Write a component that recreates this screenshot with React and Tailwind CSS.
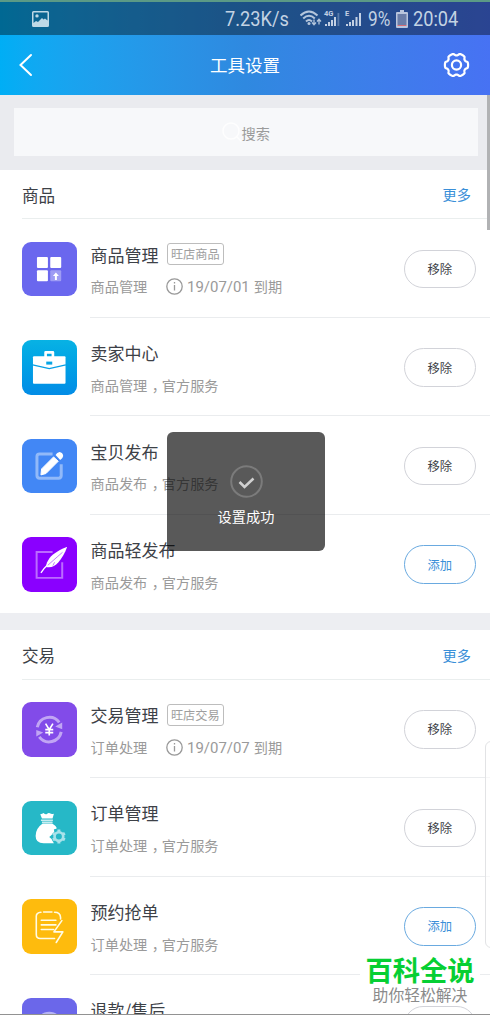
const products = [
  { name: '商品管理', tag: '旺店商品', desc: ['商品管理'], expires: '19/07/01', added: true, icon: 'grid' },
  { name: '卖家中心', desc: ['商品管理', '官方服务'], added: true, icon: 'case' },
  { name: '宝贝发布', desc: ['商品发布', '官方服务'], added: true, icon: 'pencil' },
  { name: '商品轻发布', desc: ['商品发布', '官方服务'], added: false, icon: 'feather' },
];

const trades = [
  { name: '交易管理', tag: '旺店交易', desc: ['订单处理'], expires: '19/07/07', added: true, icon: 'yen' },
  { name: '订单管理', desc: ['订单处理', '官方服务'], added: true, icon: 'bag' },
  { name: '预约抢单', desc: ['订单处理', '官方服务'], added: false, icon: 'order' },
  { name: '退款/售后', desc: ['订单处理', '官方服务'], added: true, icon: 'refund' },
];

const iconBg = {
  grid: 'bg-[#6a67ee]',
  case: 'bg-gradient-to-b from-[#08b2e4] to-[#038ce6]',
  pencil: 'bg-[#4287f5]',
  feather: 'bg-[#8a00ff]',
  yen: 'bg-[#824be9]',
  bag: 'bg-[#26b8c7]',
  order: 'bg-[#febb0d]',
  refund: 'bg-[#6b67ea]',
};

// Outline with six soft lobes, used by the gear shapes
function gearPath(cx, cy, r, depth) {
  const points = [];
  for (let i = 0; i < 72; i++) {
    const a = (i * Math.PI) / 36;
    const wave = Math.tanh(2.5 * (Math.cos(6 * a) + 0.45));
    const d = r + depth * wave;
    points.push(`${(cx + d * Math.cos(a)).toFixed(2)} ${(cy + d * Math.sin(a)).toFixed(2)}`);
  }
  return `M${points.join('L')}Z`;
}

const drawings = {
  grid: (
    <g fill="#fff">
      <rect x="45" y="45" width="33" height="33" rx="3" />
      <rect x="85" y="45" width="33" height="33" rx="3" />
      <rect x="45" y="85" width="33" height="33" rx="3" />
      <rect x="85" y="85" width="33" height="33" rx="3" opacity=".35" />
      <path d="M102 92l9 10h-6v12h-6v-12h-6z" />
    </g>
  ),
  case: (
    <g>
      <path d="M71 52V37h22v15" fill="none" stroke="#fff" strokeWidth="8" strokeLinejoin="round" />
      <rect x="33" y="49" width="98" height="83" rx="3" fill="#fff" />
      <path d="M32 75l50 11 50-11" fill="none" stroke="#069fe5" strokeWidth="4" />
      <rect x="73" y="65" width="18" height="9" fill="#07a5e5" />
    </g>
  ),
  pencil: (
    <g>
      <path d="M92 45H53q-8 0-8 8v57q0 8 8 8h57q8 0 8-8V76" fill="none" stroke="#fff" strokeWidth="9" opacity=".42" />
      <path d="M57 108l2-18L95 54l14 13-37 37z" fill="#fff" stroke="#fff" strokeWidth="3" strokeLinejoin="round" />
      <path d="M101 48q4-8 12-9 10 2 11 12-1 7-9 12z" fill="#fff" />
    </g>
  ),
  feather: (
    <g>
      <path d="M92 45H44v78h77V76" fill="none" stroke="#fff" strokeWidth="6" opacity=".42" />
      <path d="M136 29C118 36 94 48 83 63c-6 9-10 16-11 27 13 4 27-1 37-13 10-13 21-29 27-48z" fill="#fff" />
      <path d="M72 90C88 76 101 64 122 46M93 86l5-10" fill="none" stroke="#8a00ff" strokeWidth="2.2" opacity=".7" />
      <path d="M57 108q9-14 21-25" fill="none" stroke="#fff" strokeWidth="4" />
    </g>
  ),
  yen: (
    <g>
      <path d="M46 76A37 37 0 0 1 112 61M118 90A37 37 0 0 1 52 105" fill="none" stroke="#fff" strokeWidth="9" opacity=".5" />
      <path d="M121 62v20l-21-8zM43 104V84l21 8z" fill="#fff" opacity=".5" />
      <path d="M71 65l11 18 11-18M82 83v18M70 83h24M70 92h24" fill="none" stroke="#fff" strokeWidth="5" />
    </g>
  ),
  bag: (
    <g fill="#fff">
      <path d="M55 40q6-1 10-4 5 5 10 3 5-5 9-2 5 4 12 1l-4 15H60z" />
      <path d="M57 56h36v4H57zM60 62h32v4H60z" opacity=".75" />
      <path d="M62 68h29q10 6 14 14-6 4-9 3l1 8q-6 4-8 9l-7 6 7 6q3 7 7 13H65q-24 0-24-22 0-22 21-37z" />
      <circle cx="111" cy="107" r="13" fill="none" stroke="#a9e2ea" strokeWidth="8" />
      <path
        d="M111 86v8M111 120v8M93 97l7 4M122 113l7 4M93 117l7-4M122 101l7-4"
        stroke="#a9e2ea"
        strokeWidth="9"
      />
    </g>
  ),
  order: (
    <g fill="none" stroke="#fffbe4" strokeWidth="4.8" strokeLinecap="round" strokeLinejoin="round">
      <path d="M65 39h25M57 40q-14 1-14 12v55q0 12 12 12h43M98 40q17 0 18 15v5M58 64h44M58 78h44M58 92h37M120 65l-24 34h27l-20 32" />
    </g>
  ),
  refund: (
    <g fill="none" stroke="#fff" strokeWidth="7">
      <circle cx="82" cy="82" r="37" opacity=".5" />
    </g>
  ),
};

function ToolIcon({ name }) {
  return (
    <div className={`w-[54.5px] h-[54.5px] rounded-[9px] flex-shrink-0 overflow-hidden ${iconBg[name]}`}>
      <svg className="w-full h-full" viewBox="0 0 164 164">
        {drawings[name]}
      </svg>
    </div>
  );
}

function StatusBar() {
  return (
    <div className="h-[35px] pt-px flex items-center bg-black/40 border-t-2 border-[#5b9a86] text-[#c3d3e3] font-[Roboto] text-[20px]">
      <svg className="ml-8 w-[17px] h-[16px] flex-shrink-0" viewBox="0 0 17 16">
        <path
          fill="#bfd9e6"
          fillRule="evenodd"
          d="M1.500 0h14Q17 0 17 1.500v13q0 1.500-1.500 1.500h-14Q0 16 0 14.500v-13Q0 0 1.500 0zM1.500 1.500v10.500l2.500-2 2 1 4-4 1.500 1.500L13 7.500l2.500 2v-8zM5 3.200a1.700 1.700 0 1 1 0 3.400 1.700 1.700 0 0 1 0-3.400z"
        />
      </svg>
      <span className="ml-[176px] w-[75px] flex-shrink-0 whitespace-nowrap origin-left scale-x-[0.91]">7.23K/s</span>
      <svg className="w-[64px] h-[20px] flex-shrink-0" viewBox="0 0 64 20">
        <g fill="none" stroke="#b4c6dc" strokeWidth="2">
          <path d="M.5 6.500Q9-1.500 17.500 6.500M3.200 9.500q5.800-5.500 11.600 0M6 12.500q3-3 6 0" />
          <path d="M14 10.500v5M12 13.500l2 2.200 2-2.200M19 15.500v-5M17 12.500l2-2.200 2 2.200" strokeWidth="1.300" />
        </g>
        <circle cx="9" cy="14.500" r="1.500" fill="#b4c6dc" />
        <path d="M25 17v-2h2v2zM28 17v-4h2v4zM31 17v-6h2v6zM34 17V8h2v9zM46 17v-2h2v2zM49 17v-4h2v4zM52 17v-6h2v6zM55.500 17V8h2v9zM59 17V4h2v13z" fill="#c3d0e4" />
        <path d="M37.500 17V4h1.800v13z" fill="#c3d0e4" opacity=".35" />
        <text x="24" y="7" fontSize="7.500" fontWeight="700" fill="#c3d0e4">4G</text>
        <text x="45" y="7" fontSize="7.500" fontWeight="700" fill="#c3d0e4">E</text>
      </svg>
      <span className="ml-[4px] w-[28px] flex-shrink-0 origin-left scale-x-[0.86]">9%</span>
      <svg className="w-[12px] h-[18px] flex-shrink-0" viewBox="0 0 12 18">
        <path d="M4 0h4v2h3q1 0 1 1v14q0 1-1 1H1q-1 0-1-1V3q0-1 1-1h3z" fill="#b9c5dd" />
        <path d="M1.500 4h9v11h-9z" fill="#6a7da8" />
        <path d="M1.500 15h9v1h-9z" fill="#d56c75" />
      </svg>
      <span className="ml-[5px] flex-shrink-0 origin-left scale-x-[0.91]">20:04</span>
    </div>
  );
}

function Header() {
  return (
    <header className="h-[94.5px] flex-shrink-0 bg-gradient-to-r from-[#00aef5] via-[#2f89e0] to-[#4772f3]">
      <StatusBar />
      <div className="h-[59.5px] flex items-center justify-between pl-[18px] pr-[20px] text-white">
        <svg className="w-[15px] h-[24px]" viewBox="0 0 15 24">
          <path d="M13 2L2.500 12 13 22" fill="none" stroke="currentColor" strokeWidth="2" strokeLinecap="round" />
        </svg>
        <h1 className="ml-[14px] text-[17.5px] leading-none">工具设置</h1>
        <svg className="w-[27px] h-[26px]" viewBox="0 0 27 26" fill="none" stroke="currentColor" strokeLinejoin="round">
          <path d={gearPath(13.5, 13, 10.5, 1.1)} strokeWidth="2.2" />
          <circle cx="13.5" cy="13" r="4.6" strokeWidth="2.2" />
        </svg>
      </div>
    </header>
  );
}

function SearchBar() {
  return (
    <div className="h-[75.3px] flex-shrink-0 bg-[#eaebef] pt-[13.75px] pl-[13.5px] pr-[12px]">
      <div className="h-[48px] bg-[#f7f8fa] flex items-center justify-center text-[14.2px] text-[#9b9b9b]">
        <svg className="w-[20px] h-[20px]" viewBox="0 0 20 20" fill="none" stroke="#fefefe" strokeWidth="1.500">
          <circle cx="9" cy="9" r="8" />
          <path d="M15 15l4 4" />
        </svg>
        <span className="pt-[2px]">搜索</span>
      </div>
    </div>
  );
}

function ToolRow({ tool, isLast }) {
  return (
    <div className="flex h-[98.5px] flex-shrink-0 pl-[22px]">
      <div className="pt-[22.3px]">
        <ToolIcon name={tool.icon} />
      </div>
      <div className={`ml-[13.5px] flex-1 flex justify-between pr-[14.5px] border-b ${isLast ? 'border-transparent' : 'border-[#eaecee]'}`}>
        <div className="pt-[23.3px] pl-[0.5px]">
          <div className="flex items-center h-[23px] text-[17px] text-[#3d4147] whitespace-nowrap">
            {tool.name}
            {tool.tag && (
              <span className="ml-[8px] h-[22px] w-[57.5px] flex items-center justify-center rounded-[3px] border border-[#bdbdbd] text-[12.2px] text-[#9e9e9e]">
                {tool.tag}
              </span>
            )}
          </div>
          <div className="mt-[10.7px] h-[21px] flex items-center text-[14.2px] text-[#9a9a9a] whitespace-nowrap">
            {tool.desc[0]}
            {tool.desc[1] && (
              <>
                <span className="w-[14.5px] pl-[4.5px] [font-feature-settings:'halt']">，</span>
                {tool.desc[1]}
              </>
            )}
            {tool.expires && (
              <>
                <svg className="ml-[19px] w-[17px] h-[17px]" viewBox="0 0 17 17" fill="none" stroke="#999" strokeWidth="1.300">
                  <circle cx="8.500" cy="8.500" r="7.700" />
                  <path d="M8.500 7v5.500M8.500 4v1.500" />
                </svg>
                <span className="ml-[4px] pt-[2px] font-[Roboto] text-[15.5px] w-[62.5px] origin-left scale-x-[0.965]">{tool.expires}</span>
                <span className="ml-[4px]">到期</span>
              </>
            )}
          </div>
        </div>
        <button
          className={`mt-[30.5px] w-[71.5px] h-[38.5px] rounded-full border bg-white text-[12.3px] ${
            tool.added ? 'border-[#d2d3d9] text-[#3d4147]' : 'border-[#6aaae0] text-[#3a8fd8]'
          }`}
        >
          {tool.added ? '移除' : '添加'}
        </button>
      </div>
    </div>
  );
}

function Section({ title, tools }) {
  return (
    <section className="bg-white flex flex-col flex-shrink-0">
      <div className="ml-[22px] pr-[19px] h-[49.7px] flex-shrink-0 flex items-center justify-between border-b border-[#eaeeee]">
        <h2 className="text-[16.6px] text-[#3d4147] pt-[2px]">{title}</h2>
        <span className="text-[14.2px] text-[#3a8fd8] pt-[2px]">更多</span>
      </div>
      {tools.map((tool, i) => (
        <ToolRow key={tool.name} tool={tool} isLast={i === tools.length - 1} />
      ))}
    </section>
  );
}

function Toast() {
  return (
    <div className="absolute left-[167px] top-[432px] w-[158px] h-[119px] rounded-[6px] bg-black/65 flex flex-col items-center pt-[33px] text-white">
      <svg className="w-[33px] h-[33px]" viewBox="0 0 33 33" fill="none">
        <circle cx="16.500" cy="16.500" r="15.300" stroke="#7b7b7b" strokeWidth="2" />
        <path d="M9.500 17l5 5 9-8.500" stroke="#d0d0d0" strokeWidth="2.500" />
      </svg>
      <span className="mt-[8px] text-[14.2px]">设置成功</span>
    </div>
  );
}

export default function App() {
  return (
    <div className="relative w-[490px] h-[1015px] overflow-hidden bg-white flex flex-col font-['Noto_Sans_CJK_SC',sans-serif]">
      <Header />
      <SearchBar />
      <Section title="商品" tools={products} />
      <div className="h-[16.7px] flex-shrink-0 bg-[#edeef2]" />
      <Section title="交易" tools={trades} />

      <Toast />

      {/* Scrollbar and edge panel handle */}
      <div className="absolute right-0 top-[95px] w-[3.5px] h-[135px] bg-[#b1b2b4]" />
      <div className="absolute left-[485px] top-[741px] w-[12px] h-[207px] rounded-[7px] border border-[#e2e3e5] bg-white/60" />

      {/* Watermark */}
      <div className="absolute left-[360px] top-[956px] w-[120px] h-[49px] bg-white flex flex-col items-center leading-none whitespace-nowrap">
        <span className="text-[27.3px] font-bold text-[#06cf33]">百科全说</span>
        <span className="mt-[4px] text-[15.8px] text-[#8b8b8b]">助你轻松解决</span>
      </div>
      <div className="absolute left-0 bottom-0 w-full h-px bg-[#929292]" />
    </div>
  );
}
